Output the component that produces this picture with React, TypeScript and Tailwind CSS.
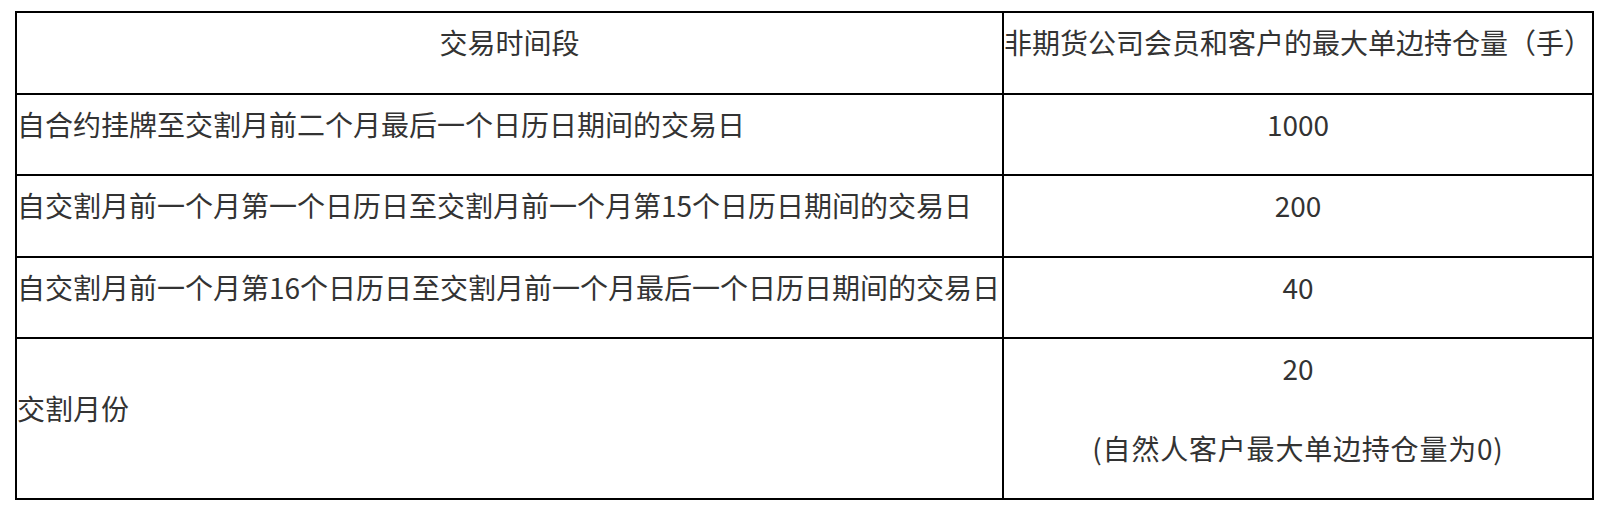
const rows = [
  { period: '自合约挂牌至交割月前二个月最后一个日历日期间的交易日', limit: ['1000'] },
  { period: '自交割月前一个月第一个日历日至交割月前一个月第15个日历日期间的交易日', limit: ['200'] },
  { period: '自交割月前一个月第16个日历日至交割月前一个月最后一个日历日期间的交易日', limit: ['40'] },
  { period: '交割月份', limit: ['20', '(自然人客户最大单边持仓量为0)'] },
];

function Para({ children, className = '' }: { children: React.ReactNode; className?: string }) {
  return <div className={`pt-[8px] pb-[29.5px] leading-[42px] whitespace-nowrap ${className}`}>{children}</div>;
}

export default function App() {
  return (
    <div className="min-h-[510px] bg-white pl-[15px] pt-[11px] text-[28px] text-[#333333] [font-family:'Noto_Sans_CJK_SC','Noto_Sans',sans-serif]">
      <div className="grid w-[1579px] grid-cols-[985px_588px] gap-[2px] bg-black p-[2px]">
        {/* 表头 */}
        <div className="bg-white text-center">
          <Para>交易时间段</Para>
        </div>
        <div className="bg-white text-center">
          <Para>非期货公司会员和客户的最大单边持仓量（手）</Para>
        </div>

        {rows.map((r) => (
          <div key={r.period} className="contents">
            <div className="flex flex-col justify-center bg-white text-left">
              <Para>{r.period}</Para>
            </div>
            <div className="flex flex-col justify-center bg-white text-center">
              {r.limit.map((t, i) => (
                <Para key={t} className={i > 0 ? 'tracking-[0.8px]' : ''}>
                  {t}
                </Para>
              ))}
            </div>
          </div>
        ))}
      </div>
    </div>
  );
}
